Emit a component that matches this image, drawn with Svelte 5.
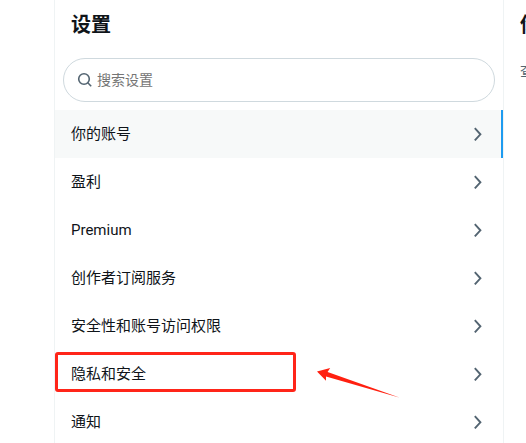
<script lang="ts">
    interface SettingsItem {
        id: string;
        label: string;
        marked?: boolean;
    }

    const items: SettingsItem[] = [
        {id: 'account', label: '你的账号'},
        {id: 'monetization', label: '盈利'},
        {id: 'premium', label: 'Premium'},
        {id: 'creator', label: '创作者订阅服务'},
        {id: 'security', label: '安全性和账号访问权限'},
        {id: 'privacy', label: '隐私和安全', marked: true},
        {id: 'notifications', label: '通知'}
    ];

    let selected = $state('account');
    let query = $state('');

    const current = $derived(items.find((item) => item.id === selected));
</script>

<div class="layout">
    <main class="settings">
        <h1>设置</h1>

        <label class="search">
            <svg viewBox="0 0 16 16" aria-hidden="true">
                <circle cx="7" cy="7" r="5.3"/>
                <path d="M10.8 10.8 L14.2 14.2"/>
            </svg>
            <input type="text" placeholder="搜索设置" aria-label="搜索设置" bind:value={query}>
        </label>

        <nav>
            {#each items as item (item.id)}
                <a
                    href="#{item.id}"
                    class="row"
                    class:active={item.id === selected}
                    onclick={() => (selected = item.id)}
                >
                    <span class="label">{item.label}</span>
                    <svg class="chevron" viewBox="0 0 10 14" aria-hidden="true">
                        <path d="M1.8 1.2 L7.4 7.3 L1.8 13.4"/>
                    </svg>
                    {#if item.marked}
                        <span class="marker"></span>
                        <svg class="arrow" viewBox="0 0 84 32" aria-hidden="true">
                            <path d="M0 4.6 L13.2 1 L10.6 4.9 L83 30.8 L9 9.4 L9 13.8 Z"/>
                        </svg>
                    {/if}
                </a>
            {/each}
        </nav>
    </main>

    <section class="detail">
        <h2>{current?.label}</h2>
        <p>查看</p>
    </section>
</div>

<style>
    :global(body) {
        background: #fff;
    }

    .layout {
        display: grid;
        grid-template-columns: 54px minmax(0, 1fr) 22px;
        height: 100vh;
        overflow: hidden;
        color: #0f1419;
        font-family: "Noto Sans CJK SC", "Noto Sans", sans-serif;
        font-size: 15px;
        line-height: 20px;
    }

    .settings {
        grid-column: 2;
        border-left: 1px solid #eff3f4;
        border-right: 1px solid #eff3f4;
    }

    h1,
    h2 {
        margin: 0;
        padding: 12px 16px;
        font-size: 20px;
        font-weight: 700;
        line-height: 24px;
        white-space: nowrap;
    }

    .search {
        display: flex;
        align-items: center;
        gap: 4px;
        box-sizing: border-box;
        height: 44px;
        margin: 10px 8px 8px;
        padding: 0 13px;
        border: 1px solid #cfd9de;
        border-radius: 22px;
    }

    .search svg {
        flex: none;
        width: 16px;
        height: 16px;
        fill: none;
        stroke: #536471;
        stroke-width: 1.6;
    }

    .search input {
        flex: 1;
        min-width: 0;
        padding: 0 0 2px;
        border: 0;
        outline: 0;
        background: transparent;
        color: inherit;
        font: inherit;
        font-size: 14px;
    }

    .search input::placeholder {
        color: #757575;
    }

    .row {
        position: relative;
        display: flex;
        align-items: center;
        justify-content: space-between;
        box-sizing: border-box;
        height: 48px;
        padding: 0 20px 0 16px;
        color: inherit;
        text-decoration: none;
    }

    .row.active {
        background: #f7f9f9;
        box-shadow: inset -2px 0 #1d9bf0;
    }

    .label {
        font-family: Roboto, "Noto Sans CJK SC", sans-serif;
    }

    .chevron {
        width: 10px;
        height: 14px;
        fill: none;
        stroke: #536471;
        stroke-width: 1.9;
    }

    /* Hand-drawn style highlight around the marked row */
    .marker {
        position: absolute;
        top: 2px;
        left: 0;
        box-sizing: border-box;
        width: 241px;
        height: 40px;
        border: 3px solid #ff2519;
        border-radius: 3px;
    }

    .arrow {
        position: absolute;
        top: 17px;
        left: 262px;
        width: 84px;
        height: 32px;
        fill: #ff2010;
    }

    .detail {
        min-width: 0;
        overflow: hidden;
    }

    .detail p {
        margin: 0;
        padding: 12px 16px;
        color: #536471;
        font-size: 14px;
        line-height: 20px;
        white-space: nowrap;
    }
</style>
